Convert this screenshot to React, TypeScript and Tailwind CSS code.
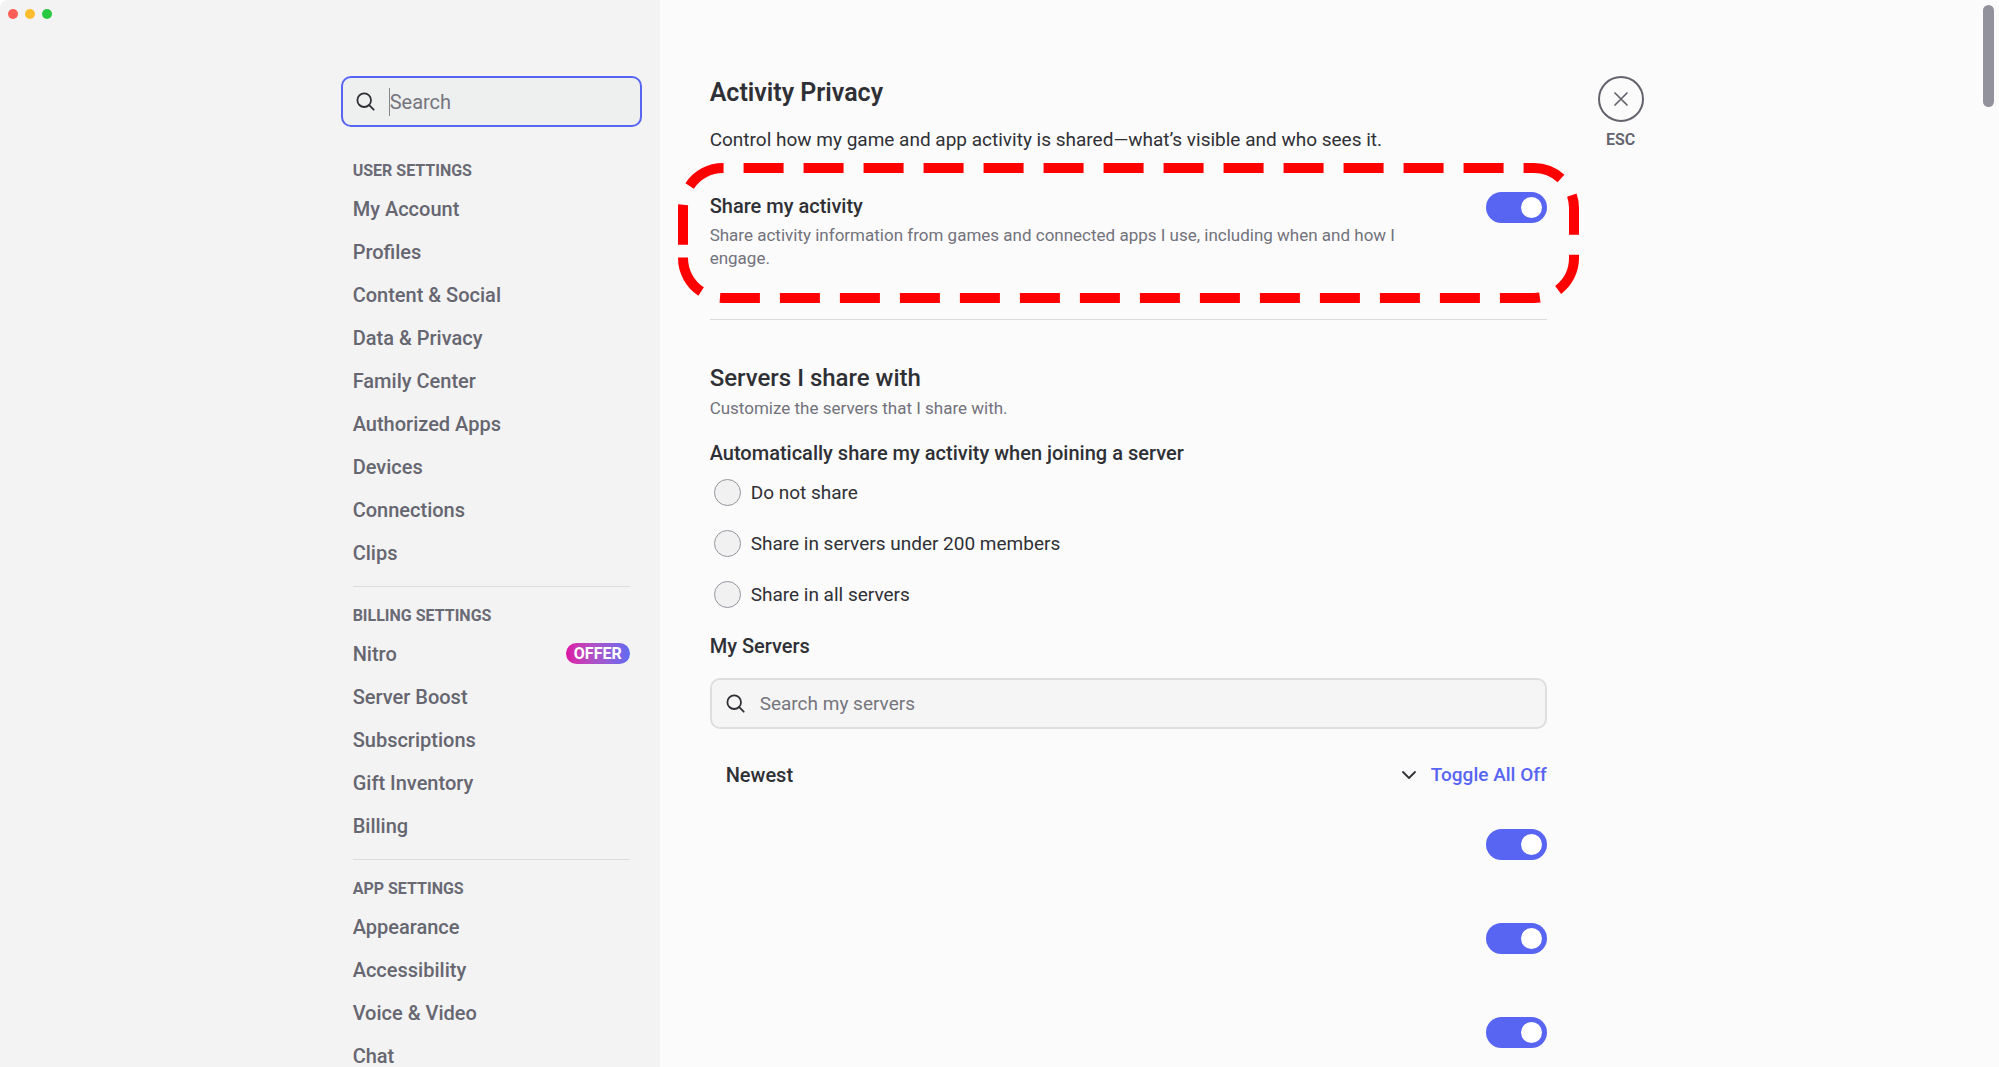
import React, { useState } from 'react';

interface NavItem {
  label: string;
  badge?: string;
}

interface NavGroup {
  title: string;
  items: NavItem[];
}

const navGroups: NavGroup[] = [
  {
    title: 'User Settings',
    items: [
      { label: 'My Account' },
      { label: 'Profiles' },
      { label: 'Content & Social' },
      { label: 'Data & Privacy' },
      { label: 'Family Center' },
      { label: 'Authorized Apps' },
      { label: 'Devices' },
      { label: 'Connections' },
      { label: 'Clips' },
    ],
  },
  {
    title: 'Billing Settings',
    items: [
      { label: 'Nitro', badge: 'OFFER' },
      { label: 'Server Boost' },
      { label: 'Subscriptions' },
      { label: 'Gift Inventory' },
      { label: 'Billing' },
    ],
  },
  {
    title: 'App Settings',
    items: [
      { label: 'Appearance' },
      { label: 'Accessibility' },
      { label: 'Voice & Video' },
      { label: 'Chat' },
    ],
  },
];

const shareOptions = ['Do not share', 'Share in servers under 200 members', 'Share in all servers'];

const SearchIcon: React.FC = () => (
  <svg viewBox="0 0 20 20" className="size-5 shrink-0" fill="none" stroke="#2f3035" strokeWidth="1.8" strokeLinecap="round" aria-hidden="true">
    <circle cx="8.2" cy="8.2" r="6.8" />
    <path d="M13.2 13.2l4.5 4.5" />
  </svg>
);

interface ToggleProps {
  label: string;
  checked: boolean;
  onChange: (checked: boolean) => void;
}

const Toggle: React.FC<ToggleProps> = ({ label, checked, onChange }) => (
  <label className="relative block h-[31px] w-[61px] shrink-0 cursor-pointer">
    <input
      type="checkbox"
      role="switch"
      aria-label={label}
      checked={checked}
      onChange={(e) => onChange(e.target.checked)}
      className="peer block h-full w-full cursor-pointer appearance-none rounded-full bg-[#92929c] checked:bg-[#5865f2]"
    />
    <span className="pointer-events-none absolute top-[5px] left-[5px] size-[21px] rounded-full bg-white peer-checked:left-[35px]" />
  </label>
);

const Sidebar: React.FC = () => {
  const [query, setQuery] = useState('');

  return (
    <aside className="flex w-[33%] shrink-0 justify-end bg-[#f3f3f4] pr-[18px]">
      <div className="w-[301px] pt-[76px]">
        <label className="relative flex h-[51px] items-center gap-[14px] rounded-[10px] border-2 border-[#5865f2] bg-[#eeefef] px-[13px]">
          <SearchIcon />
          <input
            type="text"
            aria-label="Search"
            placeholder="Search"
            value={query}
            onChange={(e) => setQuery(e.target.value)}
            className="w-full min-w-0 bg-transparent text-[20px] leading-6 text-[#2f3035] outline-none placeholder:text-[#75757e]"
          />
          {query === '' && <span className="pointer-events-none absolute top-[10px] left-[46px] h-7 w-px bg-[#85858e]" />}
        </label>

        <nav className="mt-[27px] pr-3 pl-3">
          {navGroups.map((group) => (
            <section key={group.title} className="mb-3 border-b border-[#dcdcde] pb-3 last:border-b-0">
              <h2 className="flex h-[33px] items-center text-[16px] font-bold text-[#6a6a74] uppercase">{group.title}</h2>
              <ul>
                {group.items.map((item) => (
                  <li key={item.label}>
                    <a href="#" className="flex h-[43px] items-center justify-between text-[20px] font-medium text-[#666670]">
                      {item.label}
                      {item.badge && (
                        <span className="flex h-[21px] items-center rounded-full bg-linear-to-r from-[#dd0ca5] to-[#5f6af2] px-2 text-[16px] font-bold text-white">
                          {item.badge}
                        </span>
                      )}
                    </a>
                  </li>
                ))}
              </ul>
            </section>
          ))}
        </nav>
      </div>
    </aside>
  );
};

const App: React.FC = () => {
  const [shareActivity, setShareActivity] = useState(true);
  const [servers, setServers] = useState([true, true, true]);
  const [shareMode, setShareMode] = useState('');
  const [serverQuery, setServerQuery] = useState('');

  const setServer = (index: number, value: boolean) => {
    setServers(servers.map((s, i) => (i === index ? value : s)));
  };

  return (
    <div className="relative flex h-screen overflow-hidden rounded-t-lg bg-[#fbfbfb] font-[Roboto,'Noto_Sans',sans-serif] text-[#2f3035]">
      <div className="absolute top-[9px] left-2 flex gap-[7px]">
        <span className="size-[10px] rounded-full bg-[#ff5f57]" />
        <span className="size-[10px] rounded-full bg-[#febc2e]" />
        <span className="size-[10px] rounded-full bg-[#28c840]" />
      </div>

      <Sidebar />

      <div className="flex flex-1 items-start gap-[51px] pl-[50px]">
        <main className="w-full max-w-[837px] pt-[77px]">
          <h1 className="text-[25px] leading-8 font-semibold">Activity Privacy</h1>
          <p className="mt-[19px] text-[19px] leading-6">
            Control how my game and app activity is shared—what’s visible and who sees it.
          </p>

          <section className="relative mt-[11px] flex h-[140px] items-start justify-between pt-[29px]">
            <svg viewBox="0 0 901 140" className="pointer-events-none absolute inset-y-0 -left-8 w-[901px]" fill="none" aria-hidden="true">
              <path
                d="M5 81.7V45A40 40 0 0 1 45 5H856A40 40 0 0 1 896 45V95A40 40 0 0 1 856 135H45A40 40 0 0 1 5 95Z"
                stroke="#ff0000"
                strokeWidth="10"
                strokeDasharray="40 20"
              />
            </svg>
            <div className="max-w-[700px]">
              <h2 className="text-[20px] leading-7 font-medium">Share my activity</h2>
              <p className="mt-1 text-[17px] leading-[23px] text-[#72727c]">
                Share activity information from games and connected apps I use, including when and how I engage.
              </p>
            </div>
            <Toggle label="Share my activity" checked={shareActivity} onChange={setShareActivity} />
          </section>

          <hr className="mt-4 border-[#dcdcde]" />

          <h2 className="mt-[42px] text-[24px] leading-8 font-medium">Servers I share with</h2>
          <p className="mt-[3px] text-[17px] leading-[23px] text-[#72727c]">Customize the servers that I share with.</p>

          <fieldset className="mt-[21px]">
            <legend className="text-[20px] leading-6 font-medium">Automatically share my activity when joining a server</legend>
            <div className="mt-[2px] pl-1">
              {shareOptions.map((option) => (
                <label key={option} className="flex h-[51px] items-center gap-[10px] text-[19px] leading-6">
                  <input
                    type="radio"
                    name="share-mode"
                    checked={shareMode === option}
                    onChange={() => setShareMode(option)}
                    className="size-[27px] appearance-none rounded-full border border-[#94949c] bg-[#f1f1f2] checked:border-8 checked:border-[#5865f2]"
                  />
                  {option}
                </label>
              ))}
            </div>
          </fieldset>

          <h3 className="mt-[14px] text-[20px] leading-6 font-medium">My Servers</h3>
          <label className="mt-5 flex h-[51px] items-center gap-[14px] rounded-[10px] border-2 border-[#dedee0] bg-[#f5f5f5] px-[14px]">
            <SearchIcon />
            <input
              type="text"
              aria-label="Search my servers"
              placeholder="Search my servers"
              value={serverQuery}
              onChange={(e) => setServerQuery(e.target.value)}
              className="w-full min-w-0 bg-transparent text-[19px] leading-6 outline-none placeholder:text-[#75757e]"
            />
          </label>

          <div className="mt-[34px] flex items-center justify-between font-medium">
            <div className="relative flex flex-1 items-center pl-4 text-[20px] leading-6">
              <select aria-label="Sort servers" className="w-full cursor-pointer appearance-none bg-transparent outline-none">
                <option>Newest</option>
              </select>
              <svg viewBox="0 0 16 16" className="pointer-events-none absolute right-[14px] size-4" fill="none" stroke="#2f3035" strokeWidth="1.8" strokeLinecap="round" strokeLinejoin="round" aria-hidden="true">
                <path d="M2 5l6 6 6-6" />
              </svg>
            </div>
            <button type="button" onClick={() => setServers([false, false, false])} className="cursor-pointer text-[19px] leading-6 text-[#5865f2]">
              Toggle All Off
            </button>
          </div>

          <div className="mt-[42px] flex flex-col items-end gap-[63px]">
            {servers.map((on, index) => (
              <Toggle key={index} label={`Share with server ${index + 1}`} checked={on} onChange={(value) => setServer(index, value)} />
            ))}
          </div>
        </main>

        <button type="button" aria-label="Close settings" className="mt-[76px] flex shrink-0 cursor-pointer flex-col items-center text-[#63636d]">
          <span className="flex size-[46px] items-center justify-center rounded-full border-2 border-[#63636d]">
            <svg viewBox="0 0 16 16" className="size-4" fill="none" stroke="currentColor" strokeWidth="1.7" strokeLinecap="round" aria-hidden="true">
              <path d="M2 2l12 12M14 2L2 14" />
            </svg>
          </span>
          <span className="mt-2 text-[16px] leading-5 font-semibold">ESC</span>
        </button>
      </div>

      <div className="absolute top-[5px] right-[5px] h-[102px] w-[11px] rounded-full bg-[#92929c]" />
    </div>
  );
};

export default App;
